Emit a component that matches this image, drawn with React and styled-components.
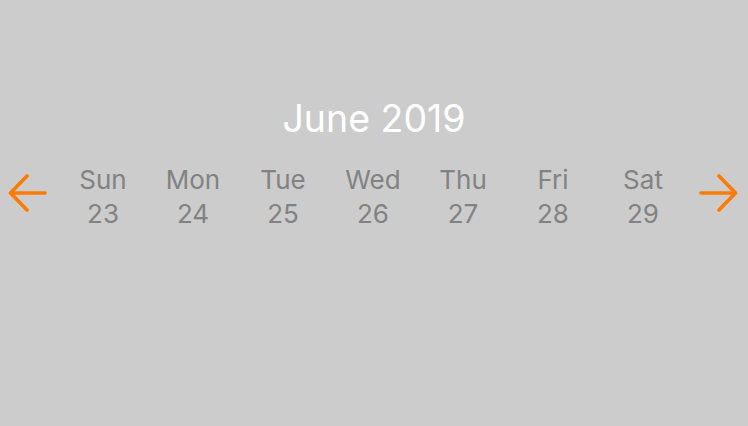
import React from 'react';
import styled, { createGlobalStyle } from 'styled-components';

const GlobalStyle = createGlobalStyle`
  html, body {
    margin: 0;
    padding: 0;
    background: #cccccc;
  }
  body {
    font-family: Inter, "Noto Sans", sans-serif;
  }
`;

const Screen = styled.div`
  width: 748px;
  height: 426px;
  background: #cccccc;
  display: flex;
  flex-direction: column;
  align-items: stretch;
  padding-top: 96px;
  box-sizing: border-box;
`;

const Title = styled.h1`
  margin: 0;
  text-align: center;
  color: #ffffff;
  font-size: 37.5px;
  font-weight: 400;
  line-height: 46px;
  letter-spacing: 0;
`;

const Week = styled.div`
  display: flex;
  align-items: center;
  margin-top: 21px;
`;

const ArrowButton = styled.button`
  flex: 1;
  border: none;
  background: none;
  padding: 0;
  margin-bottom: 8px;
  display: flex;
  justify-content: ${p => (p.$side === 'left' ? 'flex-start' : 'flex-end')};
  padding-left: ${p => (p.$side === 'left' ? '8px' : '0')};
  padding-right: ${p => (p.$side === 'right' ? '10px' : '0')};
  cursor: pointer;
`;

const Day = styled.div`
  width: 90px;
  display: flex;
  flex-direction: column;
  align-items: center;
  color: #828282;
  font-size: 26px;
  line-height: 34px;
`;

const Arrow = ({ dir }) => (
  <svg width="40" height="40" viewBox="0 0 40 40" fill="none">
    <g
      stroke="#ff7a00"
      strokeWidth="3.6"
      strokeLinecap="round"
      strokeLinejoin="round"
      transform={dir === 'right' ? 'rotate(180 20 20)' : undefined}
    >
      <path d="M37 20H3" />
      <path d="M19 3L2.5 20L19 37" />
    </g>
  </svg>
);

const days = [
  ['Sun', 23],
  ['Mon', 24],
  ['Tue', 25],
  ['Wed', 26],
  ['Thu', 27],
  ['Fri', 28],
  ['Sat', 29],
];

export default function App() {
  return (
    <>
      <GlobalStyle />
      <Screen>
        <Title>June 2019</Title>
        <Week>
          <ArrowButton $side="left" aria-label="Previous week">
            <Arrow dir="left" />
          </ArrowButton>
          {days.map(([name, date]) => (
            <Day key={name}>
              <span>{name}</span>
              <span>{date}</span>
            </Day>
          ))}
          <ArrowButton $side="right" aria-label="Next week">
            <Arrow dir="right" />
          </ArrowButton>
        </Week>
      </Screen>
    </>
  );
}
